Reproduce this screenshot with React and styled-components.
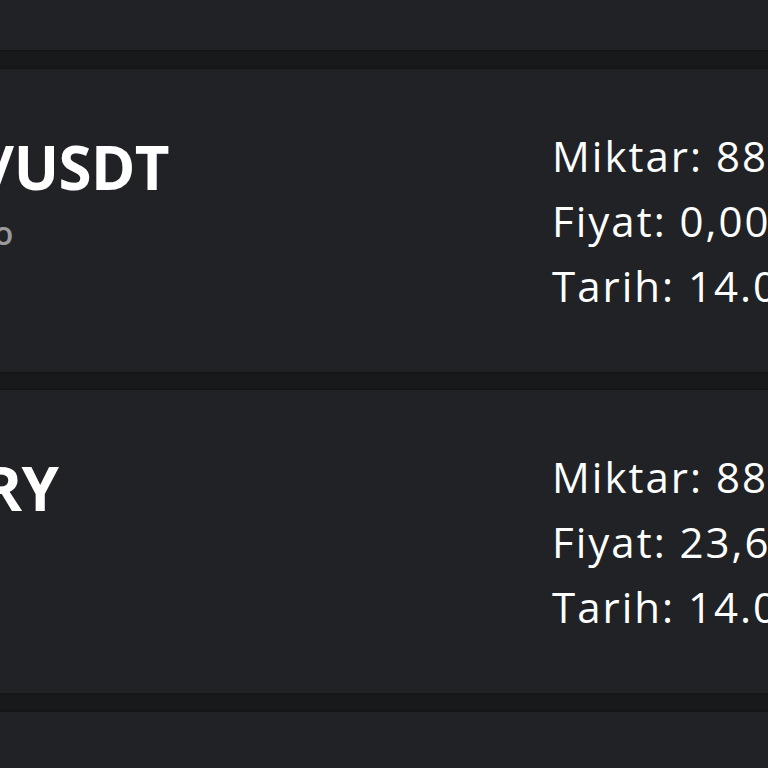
import React from "react";
import styled, { createGlobalStyle } from "styled-components";

const Global = createGlobalStyle`
  html, body { margin: 0; padding: 0; background: #18191a; overflow: hidden; }
  body { font-family: "Open Sans", "Noto Sans", sans-serif; color: #ffffff; }
`;

const Viewport = styled.div`
  width: 768px;
  height: 768px;
  overflow: hidden;
  background: #18191a;
`;

const List = styled.div`
  display: flex;
  flex-direction: column;
  gap: 18.5px;
  margin-top: -253px;
  margin-left: -271px;
  width: 1400px;
`;

const Card = styled.div`
  display: grid;
  grid-template-columns: 783px 1fr;
  align-items: center;
  height: 303px;
  padding-left: 40px;
  background: #212226;
  box-shadow: 0 0 3px rgba(0, 0, 0, 0.35);
  box-sizing: border-box;
`;

const Left = styled.div`
  align-self: start;
  padding-top: 62px;
  display: flex;
  flex-direction: column;
  gap: 10px;
  white-space: nowrap;
`;

const Title = styled.div`
  font-size: 60px;
  font-weight: 700;
  line-height: 72px;
  letter-spacing: -0.6px;
  color: #ffffff;
`;

const Sub = styled.div`
  font-size: 32px;
  font-weight: 600;
  line-height: 40px;
  letter-spacing: 2.2px;
  color: #9a9b9f;
`;

const Details = styled.div`
  display: flex;
  flex-direction: column;
  white-space: nowrap;
`;

const Line = styled.div`
  font-size: 42px;
  font-weight: 500;
  line-height: 65px;
  letter-spacing: 2px;
  color: #ffffff;
`;

const trades = [
  { pair: "BTC/USDT", sub: "", amount: "", price: "", date: "" },
  { pair: "PEOPLE/USDT", sub: "Borsa: Gate.io", amount: "88.000", price: "0,00998", date: "14.06.2023" },
  { pair: "USDT/TRY", sub: "", amount: "88,50", price: "23,6540", date: "14.06.2023" },
  { pair: "ETH/USDT", sub: "", amount: "", price: "", date: "" },
];

export default function App() {
  return (
    <Viewport>
      <Global />
      <List>
        {trades.map((t, i) => (
          <Card key={i}>
            <Left>
              <Title>{t.pair}</Title>
              {t.sub && <Sub>{t.sub}</Sub>}
            </Left>
            <Details>
              <Line>Miktar: {t.amount}</Line>
              <Line>Fiyat: {t.price}</Line>
              <Line>Tarih: {t.date}</Line>
            </Details>
          </Card>
        ))}
      </List>
    </Viewport>
  );
}
